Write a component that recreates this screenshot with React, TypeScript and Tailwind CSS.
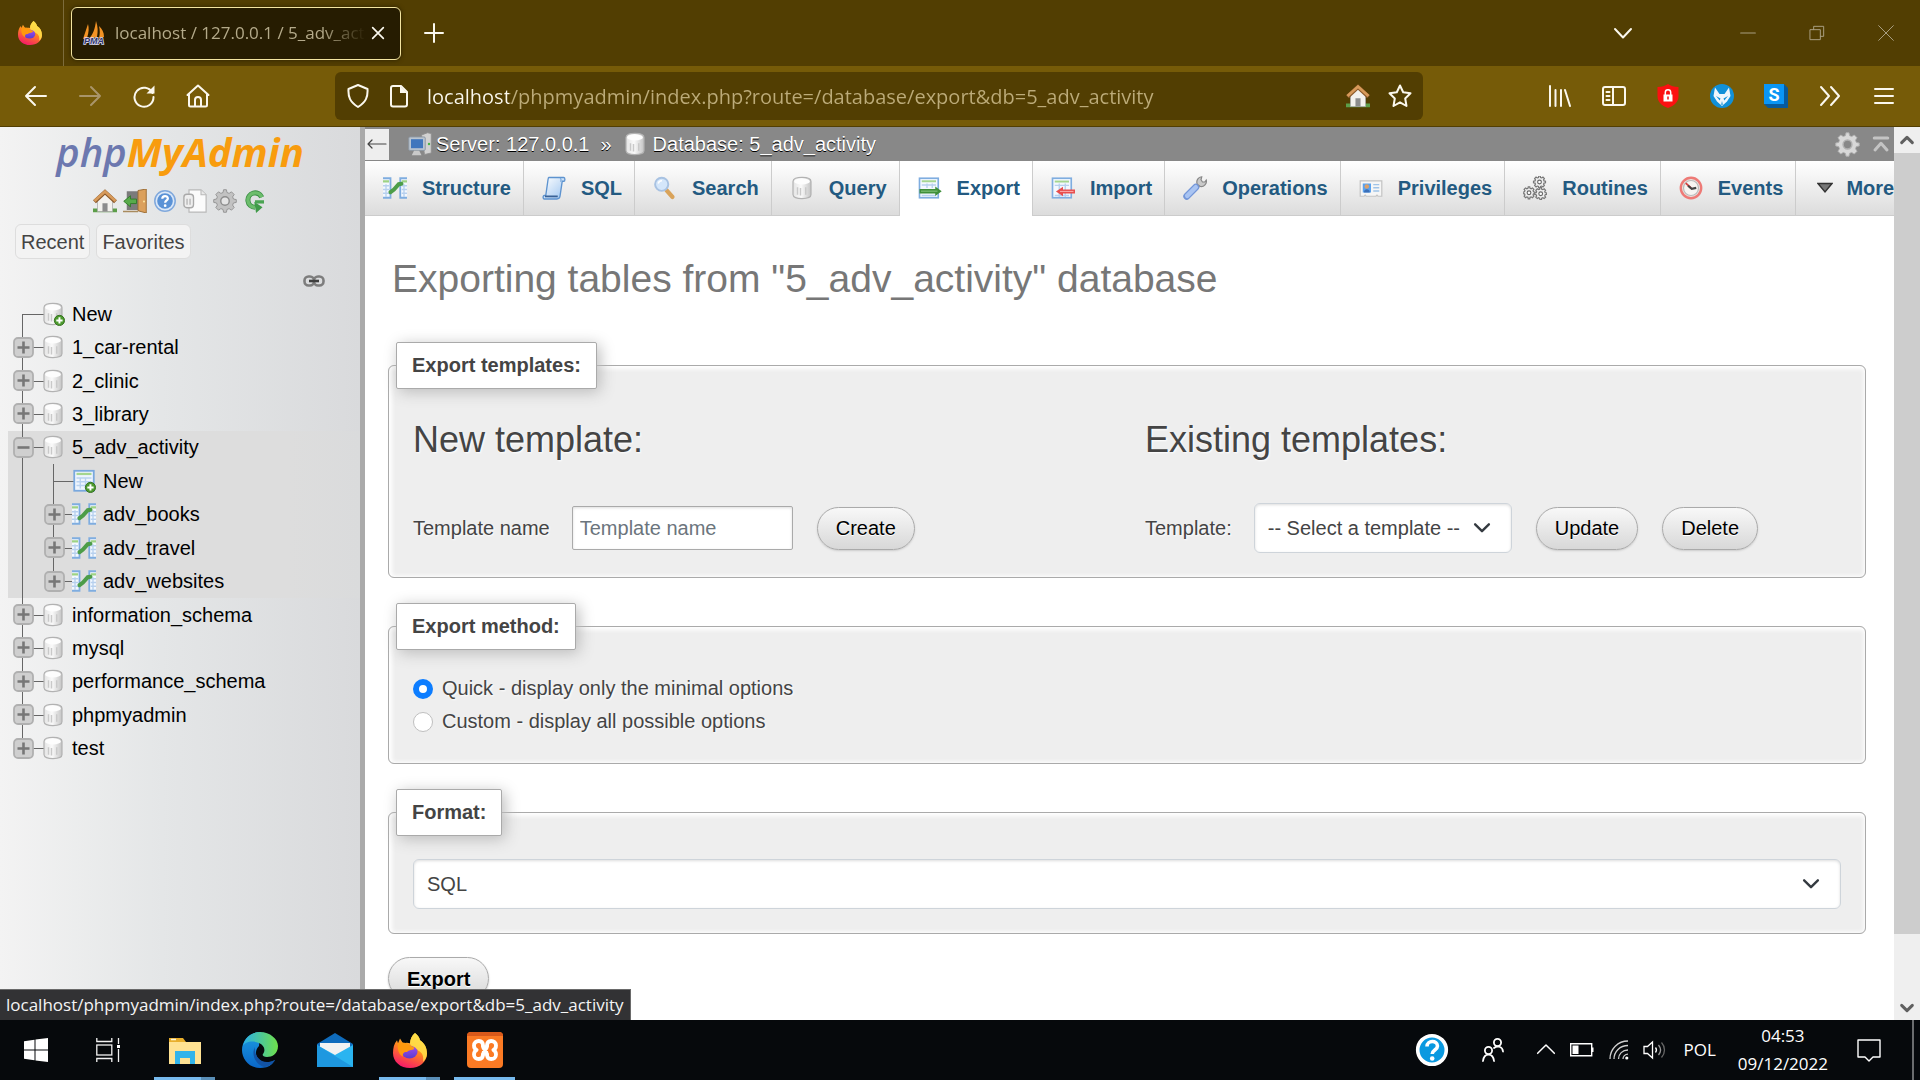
import React from "react";

type IconProps = { className?: string };

/* ---------- phpMyAdmin icons ---------- */

const DbShape = () => (
  <>
    <path d="M2 3.600C2 1.900 4.500.9 8 .9s6 1 6 2.700v8.800c0 1.700-2.500 2.700-6 2.700s-6-1-6-2.700z" fill="url(#dbBody)" stroke="#b2b2b2" strokeWidth=".8" />
    <ellipse cx="8" cy="3.600" rx="5.200" ry="2" fill="#fdfdfd" />
    <path d="M5 7.500v5M7 8v5M10.500 7.500v5" stroke="#c9c9c9" strokeWidth="1" />
  </>
);

const PlusBadge = () => (
  <>
    <circle cx="12.300" cy="12.300" r="3.400" fill="#4d9a2e" stroke="#2f6b1a" strokeWidth=".6" />
    <path d="M12.300 10.200v4.200M10.200 12.300h4.200" stroke="#fff" strokeWidth="1.300" />
  </>
);

const DbIcon = ({ className = "size-5" }: IconProps) => (
  <svg viewBox="0 0 16 16" className={className} aria-hidden="true"><DbShape /></svg>
);

const DbNewIcon = ({ className = "size-5" }: IconProps) => (
  <svg viewBox="0 0 16 16" className={className} aria-hidden="true"><DbShape /><PlusBadge /></svg>
);

const TableNewIcon = ({ className = "size-6" }: IconProps) => (
  <svg viewBox="0 0 16 16" className={className} aria-hidden="true">
    <rect x="1.500" y="1.200" width="13" height="13.300" fill="#eef5fd" stroke="#79a8de" strokeWidth="1.200" />
    <path d="M3 3.300h10" stroke="#a5d68f" strokeWidth="1.500" />
    <path d="M3 6h10M3 8.500h10M3 11h10M5.500 5.500V13M9 5.500V13" stroke="#b9d2f0" strokeWidth=".9" />
    <PlusBadge />
  </svg>
);

const StructureIcon = ({ className = "size-6" }: IconProps) => (
  <svg viewBox="0 0 16 16" className={className} aria-hidden="true">
    <path d="M0 1.500h5v13H0z" fill="#f3f8fe" />
    <path d="M0 1.500h5v13H0" fill="none" stroke="#7fade0" strokeWidth="1.200" />
    <path d="M16 1.500h-4.500v13H16" fill="#f3f8fe" stroke="#7fade0" strokeWidth="1.200" />
    <path d="M0 3.500h4M12.500 3.500H16" stroke="#9ed284" strokeWidth="1.500" />
    <path d="M0 6.500h4M0 9h4M0 11.500h4M12.500 6.500H16M12.500 9H16M12.500 11.500H16M2 5.500V14M14 5.500V14" stroke="#b7d0ee" strokeWidth=".9" />
    <path d="M5 10.800 7.300 9l3.200-3.500 1.800-.3" fill="none" stroke="#4d9d49" strokeWidth="2.700" strokeLinecap="round" />
  </svg>
);

const SqlIcon = ({ className }: IconProps) => (
  <svg viewBox="0 0 16 16" className={className} aria-hidden="true">
    <path d="M4.500 1h10c1 0 1 2.500 0 2.500h-1L12 13.500c-.2 1.200-.8 1.800-2 1.800H1.500c-1 0-1-2.300 0-2.300h1L4 2.500C4.100 1.500 4.300 1 4.500 1z" fill="url(#scroll)" stroke="#5d93cf" strokeWidth=".9" />
    <path d="M2 13.600h8.500" stroke="#3a6297" strokeWidth="1.200" />
    <path d="M12 1.500c1 .5.800 1.500.3 2.200" stroke="#7baadd" fill="none" strokeWidth=".8" />
  </svg>
);

const SearchIcon = ({ className }: IconProps) => (
  <svg viewBox="0 0 16 16" className={className} aria-hidden="true">
    <path d="m9 9.500 4 4.500" stroke="#d9a35a" strokeWidth="2.800" strokeLinecap="round" />
    <circle cx="5.800" cy="5.500" r="4.400" fill="#d4e6fa" stroke="#a8c2e2" strokeWidth="1.300" />
    <path d="M3.500 5a2.500 2.500 0 0 1 2.500-1.800" stroke="#fff" fill="none" />
  </svg>
);

const ExportIcon = ({ className }: IconProps) => (
  <svg viewBox="0 0 16 16" className={className} aria-hidden="true">
    <rect x="1" y="1.500" width="12.500" height="13" fill="#f3f8fe" stroke="#7fade0" strokeWidth="1.100" />
    <path d="M2.500 3.500h9.500" stroke="#a5d68f" strokeWidth="1.300" />
    <path d="M2.500 6h9.500M2.500 13h9.500M6 5v3M9.500 5v3" stroke="#b7d0ee" strokeWidth=".9" />
    <path d="M1 8.700h10.500V7L15.800 10.200 11.500 13.300v-1.700H1z" fill="#3f8f3a" />
    <path d="M2 10.100h11" stroke="#86c77e" strokeWidth=".7" />
  </svg>
);

const ImportIcon = ({ className }: IconProps) => (
  <svg viewBox="0 0 16 16" className={className} aria-hidden="true">
    <rect x="1" y="1.500" width="12.500" height="13" fill="#f3f8fe" stroke="#7fade0" strokeWidth="1.100" />
    <path d="M2.500 3.700h9.500" stroke="#a5d68f" strokeWidth="1.300" />
    <path d="M2.500 6.200h9.500M2.500 13h9.500M5.500 5v9M9.500 5v9" stroke="#b7d0ee" strokeWidth=".9" />
    <path d="M16 9h-8V7.200L3.300 10.400 8 13.500v-1.900h8z" fill="#e84f4f" />
    <path d="M6 10.300h9" stroke="#f9a4a4" strokeWidth=".7" />
  </svg>
);

const WrenchIcon = ({ className }: IconProps) => (
  <svg viewBox="0 0 16 16" className={className} aria-hidden="true">
    <path d="M9 7.500 11 5.500" stroke="#a8a8a8" strokeWidth="3" />
    <path d="M9.500 5.500c-1-2.500.8-5 3-5L12 2.500l1 1.500h1.500l1-1.300c.6 2.300-1.500 4.800-4 4.300z" fill="#c9c9c9" stroke="#888" strokeWidth=".8" />
    <path d="m2.500 13.500 6-6" stroke="#7396d8" strokeWidth="4.600" strokeLinecap="round" />
    <path d="m2.800 13.200 5.700-5.700" stroke="#a9c4f2" strokeWidth="3" strokeLinecap="round" />
  </svg>
);

const CardIcon = ({ className }: IconProps) => (
  <svg viewBox="0 0 16 16" className={className} aria-hidden="true">
    <path d="M.8 3.300h14.400v10.200h-2.500l-.7-.8-.7.800H4.800l-.7-.8-.7.800H.8z" fill="#f6f6f6" stroke="#c4c4c4" strokeWidth=".8" />
    <rect x="2.500" y="5" width="5.500" height="6" fill="#5aa2ee" />
    <circle cx="5.200" cy="7" r="1.500" fill="#dba06a" />
    <path d="M3.300 11c0-2.800 3.900-2.800 3.900 0z" fill="#3b6fb8" />
    <path d="M9.500 5.700h4M9.500 7.800h4M9.500 10h4" stroke="#9fc3e8" strokeWidth=".9" />
  </svg>
);

const gearPath = "M7 0h2l.4 2 1.500.6L12.600 1.500 14.500 3.400 13.400 5.100 14 6.600l2 .4v2l-2 .4-.6 1.500 1.100 1.700-1.900 1.900-1.700-1.100-1.500.6L9 16H7l-.4-2-1.500-.6-1.700 1.100-1.900-1.900 1.100-1.700L2 9.400 0 9V7l2-.4.600-1.500L1.500 3.400 3.400 1.500l1.700 1.100L6.600 2z";

const RoutinesIcon = ({ className }: IconProps) => (
  <svg viewBox="0 0 16 16" className={className} aria-hidden="true">
    {["translate(7 0) scale(.5)", "translate(0 7.200) scale(.5)", "translate(7.800 7.800) scale(.5)"].map((t) => (
      <g key={t} transform={t}>
        <path d={gearPath} fill="#eee" stroke="#777" strokeWidth="1.600" />
        <circle cx="8" cy="8" r="2.500" fill="#fff" stroke="#666" strokeWidth="1.500" />
      </g>
    ))}
  </svg>
);

const EventsIcon = ({ className }: IconProps) => (
  <svg viewBox="0 0 16 16" className={className} aria-hidden="true">
    <circle cx="8" cy="8" r="6.800" fill="#e9e5e0" stroke="#ee7a76" strokeWidth="1.600" />
    <circle cx="8" cy="8" r="5" fill="#f7f5f2" stroke="#bbb" strokeWidth=".8" />
    <path d="M4.500 4.700 8 8" stroke="#d64040" strokeWidth="1.200" />
    <path d="M6 6.500 8.500 8.500l3-.6" fill="none" stroke="#444" strokeWidth="1.400" />
  </svg>
);

const MoreIcon = () => (
  <svg viewBox="0 0 16 14" className="h-[14px] w-4" aria-hidden="true">
    <path d="M1 2.500h14L8 11z" fill="#777" stroke="#333" strokeWidth="1.400" />
  </svg>
);

const GearIcon = ({ className, fill = "#c2c2c2", stroke = "#8d8d8d", hub = "#e4e4e4" }: IconProps & { fill?: string; stroke?: string; hub?: string }) => (
  <svg viewBox="-.5 -.5 17 17" className={className} aria-hidden="true">
    <path d={gearPath} fill={fill} stroke={stroke} strokeWidth=".6" />
    <circle cx="8" cy="8" r="3" fill={hub} stroke={stroke} strokeWidth="1" />
  </svg>
);

const HouseIcon = ({ className }: IconProps) => (
  <svg viewBox="0 0 16 16" className={className} aria-hidden="true">
    <path d="M0 13h16v2.500H0z" fill="#5c9e49" />
    <path d="M3 7.500 8 3l5 4.500V15H3z" fill="#f3f1ed" stroke="#aaa" strokeWidth=".5" />
    <path d="M6.300 9.500h3.400V15H6.300z" fill="#8c8c8c" />
    <path d="M1 8.500 8 2l7 6.500" fill="none" stroke="#8c5a2b" strokeWidth="2.800" />
    <path d="M1 8 8 1.700 15 8" fill="none" stroke="#d79a5a" strokeWidth="1.900" />
  </svg>
);

const LogoutIcon = ({ className }: IconProps) => (
  <svg viewBox="0 0 16 16" className={className} aria-hidden="true">
    <path d="M2.500 1.500H10v12.500H2.500z" fill="#7b7b7b" />
    <path d="M10 1l5.500-1v16L10 14.500z" fill="#dba05c" stroke="#97662c" strokeWidth=".6" />
    <circle cx="14" cy="8.300" r=".7" fill="#fae29c" />
    <path d="M.5 8.200 5 4.500v2.200h4v3H5v2.200z" fill="#58ab4b" stroke="#2f7a28" strokeWidth=".6" />
    <path d="M0 15h10" stroke="#a88b5e" strokeWidth="1" />
  </svg>
);

const HelpIcon = ({ className }: IconProps) => (
  <svg viewBox="0 0 16 16" className={className} aria-hidden="true">
    <circle cx="8" cy="8" r="6.800" fill="#dbe8f8" stroke="#7fa8dc" strokeWidth="1" />
    <circle cx="8" cy="8" r="5.200" fill="#5a92d6" />
    <path d="M6.200 6.500c0-2.400 3.700-2.300 3.700-.2 0 1.300-1.800 1.300-1.800 2.900" fill="none" stroke="#fff" strokeWidth="1.500" />
    <circle cx="8.100" cy="11.100" r=".9" fill="#fff" />
  </svg>
);

const DocsIcon = ({ className }: IconProps) => (
  <svg viewBox="0 0 16 16" className={className} aria-hidden="true">
    <path d="M4 .6h8l3.400 3.200v11.600H4z" fill="#fbfbfb" stroke="#b9b9b9" strokeWidth=".8" />
    <path d="M12 .6v3.200h3.400" fill="#e8e8e8" stroke="#b9b9b9" strokeWidth=".7" />
    <rect x=".6" y="3.500" width="6.400" height="9" rx="2" fill="#eee" stroke="#a9a9a9" strokeWidth=".9" />
    <path d="M2.700 6.500v4M4.700 6.500v4" stroke="#b5b5b5" strokeWidth=".9" />
  </svg>
);

const ReloadGreenIcon = ({ className }: IconProps) => (
  <svg viewBox="0 0 16 16" className={className} aria-hidden="true">
    <path d="M12.500 5.500A4.800 4.800 0 1 0 8 12.200" fill="none" stroke="#3b8f45" strokeWidth="3.400" />
    <path d="M12.500 5.500A4.800 4.800 0 1 0 8 12.200" fill="none" stroke="#6cbd6c" strokeWidth="2.300" />
    <path d="M7.500 8.500 13 12.200 8.700 16z" fill="#3f9a48" />
    <path d="M8 9.700V7.500h6V9.700z" fill="#4aa452" />
  </svg>
);

const ChainIcon = ({ className }: IconProps) => (
  <svg viewBox="0 0 22 12" className={className} aria-hidden="true">
    <rect x="1.500" y="1.500" width="9.500" height="9" rx="4" fill="none" stroke="#7d7d7d" strokeWidth="2.600" />
    <rect x="11" y="1.500" width="9.500" height="9" rx="4" fill="none" stroke="#7d7d7d" strokeWidth="2.600" />
    <path d="M6 6h10" stroke="#3f3f3f" strokeWidth="2.600" />
  </svg>
);

const ServerIcon = ({ className }: IconProps) => (
  <svg viewBox="0 0 16 16" className={className} aria-hidden="true">
    <path d="M9 2l4-1.500L15.500 1v13L11 15z" fill="#d2d2d2" stroke="#8e8e8e" strokeWidth=".6" />
    <circle cx="14" cy="8" r=".8" fill="#47b447" />
    <rect x=".5" y="3.300" width="11" height="9" rx=".8" fill="#b9c4d0" stroke="#8b95a0" strokeWidth=".6" />
    <rect x="2" y="4.800" width="8" height="6" fill="#4076bd" />
    <path d="M4 12.500h3.500l1.500 3H2.500z" fill="#c9c9c9" />
  </svg>
);

const Expander = ({ open = false }: { open?: boolean }) => (
  <svg viewBox="0 0 21 21" className="size-[21px]" aria-hidden="true">
    <rect x="1" y="1" width="19" height="19" rx="4" fill="#cfcfcf" stroke="#b0b0b0" strokeWidth="1.800" />
    <path d={open ? "M4.500 10.500h12" : "M4.500 10.500h12M10.500 4.500v12"} stroke="#777" strokeWidth="2.600" />
  </svg>
);

/* ---------- browser chrome icons ---------- */

const FirefoxIcon = ({ className }: IconProps) => (
  <svg viewBox="0 0 34 44" className={className} preserveAspectRatio="none" aria-hidden="true">
    <path d="M22 0c3 3 4.500 6 5 9 4 3 7 9 7 17 0 10-7.500 18-17 18S0 36 0 25C0 19 1 13 4 9l1 4 2-6 3 6c3-1 5-1 7 0 0-5 2-10 5-13z" fill="url(#ffBody)" />
    <path d="M22 0c3 3 4.500 6 5 9 5 4 7 10 7 17 0 4-2 8-4 10 1-7-1-12-5-14-2-4-8-5-8-9 0-5 2-10 5-13z" fill="#ffe14a" opacity=".85" />
    <circle cx="16.500" cy="24" r="8" fill="url(#ffCore)" />
    <path d="M5 13c4-2 9-1 12 3 3 1 5 2 4 4-2 2-6 1-7 4-2-1-5 1-4 6-4-3-6-8-5-17z" fill="#ff980e" />
  </svg>
);

const PmaIcon = ({ className }: IconProps) => (
  <svg viewBox="0 0 24 24" className={className} aria-hidden="true">
    <path d="M6 3c1 4 1 8-1 14L1 18zM14 0c2 6 2 10 1 16l-8 2c4-5 6-10 7-18zM17 5c3 3 5 6 5 11l-5 1c1-4 1-8 0-12z" fill="#f39325" />
    <text x="12" y="23" textAnchor="middle" fontSize="9" fontWeight="700" fontStyle="italic" fontFamily="Liberation Sans" stroke="#dcdcf4" strokeWidth="1.600" paintOrder="stroke" fill="#30356b">PMA</text>
  </svg>
);

const line = { fill: "none", stroke: "currentColor", strokeLinecap: "round" as const, strokeLinejoin: "round" as const };

const ChromeIcon = ({ d, w = 2, className = "size-6" }: { d: string; w?: number; className?: string }) => (
  <svg viewBox="0 0 24 24" className={className} aria-hidden="true" {...line} strokeWidth={w}><path d={d} /></svg>
);

const ReloadIcon = () => (
  <svg viewBox="0 0 24 24" className="size-6" aria-hidden="true">
    <path d="M20.500 9A9.500 9.500 0 1 0 21.500 13" {...line} strokeWidth="2" />
    <path d="M22.500 1.500v8h-8z" fill="currentColor" />
  </svg>
);

const PageIcon = () => (
  <svg viewBox="0 0 24 24" className="size-6" aria-hidden="true">
    <path d="M6 2h8l6 6v12.500a2 2 0 0 1-2 2H6a2 2 0 0 1-2-2V4a2 2 0 0 1 2-2z" {...line} strokeWidth="2" />
    <path d="M13 2v7h7z" fill="currentColor" />
  </svg>
);

const LockShieldIcon = () => (
  <svg viewBox="0 0 24 24" className="size-6" aria-hidden="true">
    <path d="M12 0c3 2 6 3 10.500 3v9c0 6-4 9.500-10.500 12C5.500 21.500 1.500 18 1.500 12V3C6 3 9 2 12 0z" fill="#fb1111" />
    <rect x="7.500" y="10.500" width="9" height="7" fill="#fff" />
    <path d="M9.300 11V8.500a2.700 2.700 0 0 1 5.400 0V11" fill="none" stroke="#fff" strokeWidth="1.500" />
    <path d="M12 12.500v3" stroke="#e11" strokeWidth="1.500" />
  </svg>
);

const FoxIcon = () => (
  <svg viewBox="0 0 24 24" className="size-6" aria-hidden="true">
    <circle cx="12" cy="12" r="12" fill="#1190d8" />
    <path d="M5 3.500 9.500 10h5L19 3.500l1.500 8.500L17 17.500 12 22l-5-4.500L3.500 12z" fill="#eef6fc" />
    <path d="m6 12 4.500 2.500-.8 2zM18 12l-4.500 2.500.8 2z" fill="#1190d8" />
    <path d="m12 17 1.500 4h-3z" fill="#6ab8e4" />
  </svg>
);

const SIcon = () => (
  <svg viewBox="0 0 24 24" className="size-6" aria-hidden="true">
    <path d="M20 0l4 4v20H4l-4-4z" fill="#075a9c" />
    <path d="M0 0h20v20H0z" fill="#0a96f5" />
    <text x="10" y="16.500" textAnchor="middle" fontSize="18" fontWeight="700" fontFamily="Roboto" fill="#fff">S</text>
  </svg>
);

/* ---------- taskbar icons ---------- */

const WindowsIcon = () => (
  <svg viewBox="0 0 24 24" className="size-6" fill="#fff" aria-hidden="true">
    <path d="M0 3.300 10.500 1.800v9.700H0zM11.500 1.600 24 0v11.500H11.500zM0 12.500h10.500v9.700L0 20.700zM11.500 12.500H24V24l-12.500-1.600z" />
  </svg>
);

const TaskViewIcon = () => (
  <svg viewBox="0 0 24 24" className="size-6" fill="none" stroke="#f2f2f2" strokeWidth="1.300" aria-hidden="true">
    <rect x=".8" y="7" width="15" height="10" />
    <path d="M.8 0v3.500h15V0M.8 24v-3.500h15V24M22.500 0v6M22.500 11v13" />
    <path d="M21 7h3v3h-3z" fill="#fff" stroke="none" />
  </svg>
);

const ExplorerIcon = () => (
  <svg viewBox="0 0 32 27" className="h-[27px] w-8" aria-hidden="true">
    <path d="M0 1h14l3 4v6H0z" fill="#e8ae2c" />
    <path d="M0 5h32v22H0z" fill="#ffe292" />
    <path d="M6 14h20v13h-5v-6H11v6H6z" fill="#32b4ea" />
    <path d="M2 2.500h5" stroke="#fff7d6" strokeWidth="1.500" />
  </svg>
);

const EdgeIcon = () => (
  <svg viewBox="0 0 36 36" className="size-9" aria-hidden="true">
    <path d="M18 0C8 0 0 8 0 18c0 9 7 18 18 18 4 0 9-1 12-4l3-4c-5 3-14 4-18-3-2-4-1-8 2-11z" fill="url(#edgeBlue)" />
    <path d="M1 14C3 5 10 0 18 0c10 0 18 7 18 14 0 8-6 11-11 11-4 0-5-2-4-3 3-4 1-9-4-11C10 8 3 10 1 14z" fill="url(#edgeTop)" />
    <path d="M13 15c-4 7 0 17 9 20 4 0 9-3 11-7-4 2-9 3-13 1-5-3-8-8-7-14z" fill="#1253a5" />
  </svg>
);

const MailIcon = () => (
  <svg viewBox="0 0 36 34" className="h-[34px] w-9" aria-hidden="true">
    <path d="M0 11 18 0l18 11v6H0z" fill="#0f6cbd" />
    <path d="M3 10h30v10L18 27 3 20z" fill="#f2f2f2" />
    <path d="M0 12l18 10 18-10v22H0z" fill="#2ab4f0" />
    <path d="M0 12l36 22H0z" fill="#1e98e0" />
  </svg>
);

const XamppIcon = () => (
  <svg viewBox="0 0 36 36" className="size-9" aria-hidden="true">
    <rect width="36" height="36" rx="4" fill="#fb7a24" />
    <path d="M0 4a4 4 0 0 1 4-4h28a4 4 0 0 1 4 4z" fill="#d9591a" />
    <g fill="none" stroke="#fff" strokeWidth="3.800" strokeLinecap="round" strokeLinejoin="round">
      <path d="M16 14c0-3.500-1.500-5-4.200-5S7 10.800 7 13.500s1 3.700 2.600 4.500C8 18.800 7 19.800 7 22.500S9 27 11.800 27s4.200-1.500 4.200-4.500" />
      <path d="M20 14c0-3.500 1.500-5 4.200-5S29 10.800 29 13.500s-1 3.700-2.600 4.500c1.600.8 2.600 1.800 2.600 4.500S27 27 24.200 27 20 25.500 20 22.500" />
      <path d="M16 14c0 1.500.5 2.500 2 4s2 2.500 2 4.500M20 14c0 1.500-.5 2.500-2 4s-2 2.500-2 4.500" />
    </g>
  </svg>
);

const HelpBubbleIcon = () => (
  <svg viewBox="0 0 34 34" className="size-[34px]" aria-hidden="true">
    <circle cx="17" cy="17" r="14.300" fill="#0a99e0" stroke="#fff" strokeWidth="3.600" />
    <path d="M12 13.500c0-6.500 10.500-6.500 10.500-.5 0 4-5.300 4-5.300 8" fill="none" stroke="#fff" strokeWidth="3.600" />
    <circle cx="17.200" cy="25.500" r="2.300" fill="#fff" />
  </svg>
);

const PeopleIcon = () => (
  <svg viewBox="0 0 24 24" className="size-6" {...line} strokeWidth="1.800" aria-hidden="true">
    <circle cx="16.500" cy="4.500" r="3.600" /><path d="M13 10c3-2.500 8.500-2 9 3.500" />
    <circle cx="7.500" cy="12.500" r="3.600" /><path d="M2 23c1-8.500 10-8.500 11 0" />
  </svg>
);

const BatteryIcon = () => (
  <svg viewBox="0 0 24 14" className="h-[14px] w-6" aria-hidden="true">
    <path d="M.7.700h21v12H.7z" fill="none" stroke="#fff" strokeWidth="1.400" />
    <path d="M2.500 2.500h6v8.500h-6zM22 4.500h1.500v4.500H22z" fill="#fff" />
  </svg>
);

const WifiIcon = () => (
  <svg viewBox="0 0 20 20" className="size-5" fill="none" stroke="#cfcfcf" strokeWidth="1.300" aria-hidden="true">
    <path d="M1 19C1 9 9 1 19 1" /><path d="M5 19c0-7.500 6-13.500 14-13.500" /><path d="M9.500 19c0-5 4-9 9.500-9" /><path d="M14 19c0-2.500 2-4.800 5-4.800" />
    <circle cx="17.800" cy="18" r="1.600" fill="#fff" stroke="none" />
  </svg>
);

const VolumeIcon = () => (
  <svg viewBox="0 0 24 20" className="h-5 w-6" fill="none" stroke="#fff" strokeWidth="1.300" aria-hidden="true">
    <path d="M1 6.500h3.500L9.500 2v16l-5-4.500H1z" /><path d="M12.500 7.500c1.200 1.500 1.200 3.500 0 5" />
    <path d="M15.500 5c2.500 3 2.500 7 0 10" stroke="#999" /><path d="M18.500 2.500c4 4.500 4 10.500 0 15" stroke="#666" />
  </svg>
);

const Defs = () => (
  <svg className="absolute size-0" aria-hidden="true">
    <defs>
      <linearGradient id="dbBody"><stop offset="0" stopColor="#e4e4e4" /><stop offset=".45" stopColor="#fafafa" /><stop offset="1" stopColor="#c4c4c4" /></linearGradient>
      <linearGradient id="scroll" x1="0" y1="0" x2="1" y2="1"><stop offset="0" stopColor="#fff" /><stop offset="1" stopColor="#9cc4f0" /></linearGradient>
      <linearGradient id="ffBody" x1=".7" y1="0" x2=".3" y2="1"><stop offset="0" stopColor="#ffe045" /><stop offset=".45" stopColor="#ff8a1c" /><stop offset="1" stopColor="#f5156c" /></linearGradient>
      <linearGradient id="ffCore" x1="0" y1="0" x2="0" y2="1"><stop offset="0" stopColor="#a14df0" /><stop offset="1" stopColor="#5a3ccc" /></linearGradient>
      <linearGradient id="edgeBlue" x1="0" y1="0" x2="0" y2="1"><stop offset="0" stopColor="#1c9de2" /><stop offset="1" stopColor="#0a66c8" /></linearGradient>
      <linearGradient id="edgeTop"><stop offset="0" stopColor="#2ab0e8" /><stop offset="1" stopColor="#6fe04a" /></linearGradient>
    </defs>
  </svg>
);

/* ---------- data ---------- */

const tabs = [
  { label: "Structure", Icon: StructureIcon },
  { label: "SQL", Icon: SqlIcon },
  { label: "Search", Icon: SearchIcon },
  { label: "Query", Icon: DbIcon },
  { label: "Export", Icon: ExportIcon, active: true },
  { label: "Import", Icon: ImportIcon },
  { label: "Operations", Icon: WrenchIcon },
  { label: "Privileges", Icon: CardIcon },
  { label: "Routines", Icon: RoutinesIcon },
  { label: "Events", Icon: EventsIcon },
];

type Node = { name: string; level: 0 | 1; kind: "new" | "item"; open?: boolean; lit?: boolean; last?: boolean };

const tree: Node[] = [
  { name: "New", level: 0, kind: "new" },
  { name: "1_car-rental", level: 0, kind: "item" },
  { name: "2_clinic", level: 0, kind: "item" },
  { name: "3_library", level: 0, kind: "item" },
  { name: "5_adv_activity", level: 0, kind: "item", open: true, lit: true },
  { name: "New", level: 1, kind: "new", lit: true },
  { name: "adv_books", level: 1, kind: "item", lit: true },
  { name: "adv_travel", level: 1, kind: "item", lit: true },
  { name: "adv_websites", level: 1, kind: "item", lit: true, last: true },
  { name: "information_schema", level: 0, kind: "item" },
  { name: "mysql", level: 0, kind: "item" },
  { name: "performance_schema", level: 0, kind: "item" },
  { name: "phpmyadmin", level: 0, kind: "item" },
  { name: "test", level: 0, kind: "item", last: true },
];

/* ---------- parts ---------- */

function TreeCell({ node }: { node: Node }) {
  const isNew = node.kind === "new";
  const rail = node.level === 1 && isNew ? "inset-y-0" : isNew ? "top-1/2 bottom-0" : node.last ? "top-0 bottom-1/2" : "inset-y-0";
  return (
    <>
      <span className="relative flex w-7 shrink-0 items-center self-stretch">
        <span className={`absolute left-[9px] w-px bg-[#666] ${rail}`} />
        <span className={`absolute -right-1 top-1/2 h-px bg-[#666] ${isNew ? "left-[9px]" : "left-5"}`} />
        {!isNew && (
          <button className="relative" aria-label={`Expand ${node.name}`}><Expander open={node.open} /></button>
        )}
      </span>
      <a href="#" className="relative flex items-center gap-[7px] self-stretch">
        {node.level === 0
          ? (isNew ? <DbNewIcon className="size-6" /> : <DbIcon className="size-6" />)
          : (isNew ? <TableNewIcon className="size-6" /> : <StructureIcon className="size-6" />)}
        <span>{node.name}</span>
      </a>
    </>
  );
}

function Sidebar() {
  const quick = [
    ["Home", HouseIcon], ["Log out", LogoutIcon], ["Documentation", HelpIcon],
    ["MariaDB documentation", DocsIcon], ["Settings", GearIcon], ["Reload", ReloadGreenIcon],
  ] as const;
  return (
    <aside className="flex w-[365px] shrink-0 flex-col border-r-[5px] border-[#aaa] bg-[linear-gradient(90deg,#f3f3f3,#e4e6e7_45%,#d9dadc)] text-xl leading-6 text-black">
      <a href="#" className="mt-1 flex h-[50px] justify-center font-['Open_Sans',sans-serif] text-[40px] font-bold italic leading-[42px]">
        <span className="font-semibold text-[#6c78af]">php</span><span className="text-[#f89c0e]">MyAdmin</span>
      </a>
      <nav className="mt-2 flex justify-center gap-[6px]">
        {quick.map(([label, Icon]) => (
          <a key={label} href="#" aria-label={label}><Icon className="size-6" /></a>
        ))}
      </nav>
      <div className="mt-[11px] flex gap-[6px] px-[15px] text-[#444]">
        <button className="h-[35px] rounded-md border border-[#ddd] bg-[#f3f3f3] px-[5px]">Recent</button>
        <button className="h-[35px] rounded-md border border-[#ddd] bg-[#f3f3f3] px-[5px]">Favorites</button>
      </div>
      <button className="mr-[35px] mt-4 self-end" aria-label="Unlink from main panel"><ChainIcon className="h-3 w-[22px]" /></button>
      <ul className="mt-[10px] grid h-[468px] auto-rows-fr pl-2">
        {tree.map((n, i) => (
          <li key={i} className={`flex items-center pl-[5px] ${n.lit ? "bg-[linear-gradient(90deg,#ddd_80%,#dadbdc)]" : ""}`}>
            {n.level === 1 && (
              <span className="relative w-[31px] shrink-0 self-stretch"><span className="absolute inset-y-0 left-[9px] w-px bg-[#666]" /></span>
            )}
            <TreeCell node={n} />
          </li>
        ))}
      </ul>
    </aside>
  );
}

function Group({ title, className, children }: { title: string; className: string; children: React.ReactNode }) {
  return (
    <fieldset className={`min-w-0 rounded-md border border-[#aaa] bg-[#eee] px-6 shadow-[inset_1px_1px_4px_2px_#fff] [text-shadow:1px_1px_2px_#fff] ${className}`}>
      <legend className="-ml-[17px] rounded-xs border border-[#aaa] bg-white px-[15px] py-[10px] font-bold leading-[25px] shadow-[3px_3px_15px_#bbb]">{title}</legend>
      {children}
    </fieldset>
  );
}

const pill = "h-[43px] rounded-full border border-[#aaa] bg-[linear-gradient(#f8f8f8,#d8d8d8)] px-[18px] text-black shadow-[0_1px_2px_#ccc] [text-shadow:0_1px_0_#fff]";

function Picker({ id, value, className }: { id: string; value: string; className: string }) {
  return (
    <span className={`relative block ${className}`}>
      <select id={id} aria-label={id} className="h-[50px] w-full appearance-none rounded-md border border-[#ced4da] bg-white pl-[13px] pr-10 text-[#444] shadow-[inset_0_1px_3px_#ddd]">
        <option>{value}</option>
      </select>
      <ChromeIcon d="m4.500 8 7.500 7.500L19.500 8" w={2.600} className="pointer-events-none absolute right-[19px] top-[14px] size-[22px] text-[#343a40]" />
    </span>
  );
}

function MainPanel() {
  return (
    <main className="flex min-w-0 flex-1 flex-col overflow-hidden bg-white text-xl text-[#444]">
      <div className="flex h-[34px] shrink-0 items-center bg-[#888] text-white [text-shadow:0_1px_0_#000]">
        <button className="flex h-[31px] w-6 items-center justify-center bg-[#eee] text-[#444]" aria-label="Hide panel">
          <svg viewBox="0 0 20 10" className="h-[10px] w-5" {...line} strokeWidth="1.200" aria-hidden="true"><path d="M19 5H1M5 1 1 5l4 4" /></svg>
        </button>
        <ServerIcon className="ml-[19px] size-6" />
        <a href="#" className="ml-1">Server: 127.0.0.1</a>
        <span className="mx-[11px]">»</span>
        <DbIcon className="size-6" />
        <a href="#" className="ml-[6px]">Database: 5_adv_activity</a>
        <span className="ml-auto flex items-center gap-3">
          <button aria-label="Page settings"><GearIcon className="size-[25px]" fill="#d8d8d8" stroke="#b0b0b0" hub="#888" /></button>
          <button aria-label="Collapse" className="mr-1 text-[#c4c4c4]"><ChromeIcon d="M3 4h18M4 20l8-9 8 9" w={4} className="size-[18px]" /></button>
        </span>
      </div>
      <nav className="flex h-[55px] shrink-0 border-b border-[#ccc] bg-[linear-gradient(#fff,#dcdcdc)] font-bold text-[#235a81]">
        {tabs.map(({ label, Icon, active }) => (
          <a key={label} href="#" className={`flex shrink-0 items-center gap-[15px] border-r border-r-[#ccc] pb-[1px] pl-[18px] pr-3 ${active ? "-mb-px bg-white" : ""}`}>
            <Icon className="size-6" />{label}
          </a>
        ))}
        <a href="#" className="flex shrink-0 items-center gap-[13px] pb-[1px] pl-[21px]"><MoreIcon />More</a>
      </nav>

      <div className="shrink-0 pl-[23px] pr-7">
        <h2 className="ml-1 mt-[39px] text-[39px] leading-[48px] text-[#777]">Exporting tables from "5_adv_activity" database</h2>

        <Group title="Export templates:" className="mt-[39px] h-[236px]">
          <div className="grid grid-cols-2 gap-9 pt-[29px]">
            <form>
              <h3 className="text-[36px] leading-[43px]">New template:</h3>
              <div className="mt-[42px] flex h-[50px] items-center">
                <label htmlFor="tplName">Template name</label>
                <input id="tplName" placeholder="Template name" className="ml-[22px] h-[44px] w-[221px] rounded-xs border border-[#aaa] bg-white px-[7px] shadow-[inset_0_1px_3px_#ddd] placeholder:text-[#6c757d]" />
                <button type="button" className={`ml-6 ${pill}`}>Create</button>
              </div>
            </form>
            <form>
              <h3 className="text-[36px] leading-[43px]">Existing templates:</h3>
              <div className="mt-[42px] flex h-[50px] items-center">
                <label htmlFor="template">Template:</label>
                <Picker id="template" value="-- Select a template --" className="ml-[22px] w-[258px]" />
                <button type="button" className={`ml-6 ${pill}`}>Update</button>
                <button type="button" className={`ml-6 ${pill}`}>Delete</button>
              </div>
            </form>
          </div>
        </Group>

        <Group title="Export method:" className="mt-[25px] h-[161px]">
          <div className="flex flex-col gap-1 pt-6 leading-[29px]">
            {["Quick - display only the minimal options", "Custom - display all possible options"].map((t, i) => (
              <label key={t} className="flex items-center gap-[9px]">
                <input type="radio" name="method" defaultChecked={i === 0} className="size-5 appearance-none rounded-full border border-[#bfbfbf] bg-white checked:border-[6px] checked:border-[#0d7dff]" />
                {t}
              </label>
            ))}
          </div>
        </Group>

        <Group title="Format:" className="mt-[25px] h-[145px]">
          <div className="pt-[23px]"><Picker id="format" value="SQL" className="w-full" /></div>
        </Group>

        <button className={`mt-[23px] font-bold ${pill}`}>Export</button>
      </div>
    </main>
  );
}

function TitleBar() {
  return (
    <header className="flex h-[66px] shrink-0 items-center bg-[#523e02] text-[#fbf8ee]">
      <a href="#" aria-label="Firefox" className="flex h-full w-[64px] items-center border-r border-[#7d6c3c] pl-[18px]"><FirefoxIcon className="h-6 w-6" /></a>
      <div className="ml-[7px] flex h-[53px] w-[330px] items-center rounded-md border border-[#f3e4a0] bg-[#261c01] pl-[10px] pr-[14px] shadow-[0_0_4px_#2a2000]">
        <PmaIcon className="size-6 shrink-0" />
        <span className="ml-[9px] flex-1 overflow-hidden whitespace-nowrap text-[17px] text-[#b4aa8a] [mask-image:linear-gradient(90deg,#000_82%,transparent)]">localhost / 127.0.0.1 / 5_adv_activity</span>
        <button aria-label="Close tab" className="ml-1"><ChromeIcon d="M4 4l16 16M20 4 4 20" w={2.500} className="size-4" /></button>
      </div>
      <button aria-label="New tab" className="ml-[21px]"><ChromeIcon d="M12 3v18M3 12h18" /></button>
      <div className="ml-auto flex items-center pr-[26px]">
        <button aria-label="List all tabs" className="mr-[105px]"><ChromeIcon d="m4 8 8 8.500L20 8" /></button>
        <div className="flex items-center gap-[53px] text-[#a89e80]">
          <button aria-label="Minimize"><ChromeIcon d="M1 12h22" w={1.600} className="size-4" /></button>
          <button aria-label="Restore"><ChromeIcon d="M2 7h15v15H2zM7 7V2h15v15h-5" w={1.500} className="size-4" /></button>
          <button aria-label="Close"><ChromeIcon d="M1 1l22 22M23 1 1 23" w={1.500} className="size-4" /></button>
        </div>
      </div>
    </header>
  );
}

function ToolBar() {
  return (
    <div className="flex h-[61px] shrink-0 items-center border-b border-[#523e02] bg-[#765b08] text-[#fbf8ee]">
      <nav className="flex gap-[30px] pl-6">
        <button aria-label="Back"><ChromeIcon d="M22 12H2M11 3l-9 9 9 9" /></button>
        <button aria-label="Forward" className="text-[#a9956a]"><ChromeIcon d="M2 12h20M13 3l9 9-9 9" /></button>
        <button aria-label="Reload"><ReloadIcon /></button>
        <button aria-label="Home"><ChromeIcon d="M1.500 11 12 1.500 22.500 11M3 10v11a1.500 1.500 0 0 0 1.500 1.500h15A1.500 1.500 0 0 0 21 21V10M9 22v-6a3 3 0 0 1 6 0v6" /></button>
      </nav>
      <div className="ml-[125px] mr-[125px] flex h-12 flex-1 items-center rounded-md bg-[#523e02] px-[11px]">
        <ChromeIcon d="M12 1l9.500 4C22 13 20 18 12 23 4 18 2 13 2.500 5z" />
        <span className="ml-[17px]"><PageIcon /></span>
        <input aria-label="Address" defaultValue="localhost/phpmyadmin/index.php?route=/database/export&db=5_adv_activity" className="ml-4 min-w-0 flex-1 bg-[linear-gradient(90deg,#fbf8ee_82px,#bcab79_82px)] bg-clip-text pt-[2px] font-['Open_Sans',sans-serif] text-[20px] text-transparent outline-none" />
        <HouseIcon className="size-6" />
        <button aria-label="Bookmark" className="ml-[18px]"><ChromeIcon d="m12 1.500 3.200 6.800 7.300 1-5.300 5.200 1.300 7.500L12 18.300 5.500 22l1.300-7.500L1.500 9.300l7.300-1z" /></button>
      </div>
      <nav className="flex items-center gap-[30px] pr-6">
        <button aria-label="Library"><ChromeIcon d="M2 2v20M7.500 6v16M13 6v16M17 6l5 16" /></button>
        <button aria-label="Sidebars"><ChromeIcon d="M3 3h18a2 2 0 0 1 2 2v14a2 2 0 0 1-2 2H3a2 2 0 0 1-2-2V5a2 2 0 0 1 2-2zM11 3v18M4.500 8h3M4.500 12h3M4.500 16h3" /></button>
        <button aria-label="Ad blocker"><LockShieldIcon /></button>
        <button aria-label="Fox extension"><FoxIcon /></button>
        <button aria-label="S extension"><SIcon /></button>
        <button aria-label="More tools"><ChromeIcon d="m3 3 8 9-8 9M13 3l8 9-8 9" /></button>
        <button aria-label="Menu"><ChromeIcon d="M3 5h18M3 12h18M3 19h18" /></button>
      </nav>
    </div>
  );
}

function ScrollBar() {
  return (
    <div className="flex w-[26px] shrink-0 flex-col items-center bg-[#efefef] text-[#606060]">
      <span className="flex h-[26px] items-center"><ChromeIcon d="m4 16 8-8 8 8" w={4.500} className="size-4" /></span>
      <span className="w-full grow bg-[#cdcdcd]" />
      <span className="flex h-[86px] items-end pb-1"><ChromeIcon d="m4 8 8 8 8-8" w={4.500} className="size-4" /></span>
    </div>
  );
}

function TaskBar() {
  const apps = [
    { label: "File Explorer", icon: <ExplorerIcon />, run: "split" },
    { label: "Microsoft Edge", icon: <EdgeIcon />, run: "" },
    { label: "Mail", icon: <MailIcon />, run: "" },
    { label: "Firefox", icon: <FirefoxIcon className="h-[35px] w-[34px]" />, run: "split" },
    { label: "XAMPP", icon: <XamppIcon />, run: "full" },
  ];
  return (
    <footer className="flex h-[60px] shrink-0 items-stretch bg-[#06090c] text-white">
      <button aria-label="Start" className="flex w-[72px] items-center justify-center"><WindowsIcon /></button>
      <button aria-label="Task View" className="mr-[3px] flex w-[72px] items-center justify-center"><TaskViewIcon /></button>
      {apps.map((a) => (
        <button key={a.label} aria-label={a.label} className="flex w-[75px] flex-col items-center">
          <span className="flex flex-1 items-center pt-[3px]">{a.icon}</span>
          <span className="flex h-[3px] w-[61px]">
            {a.run && <span className="flex-1 bg-[#76b9ed]" />}
            {a.run === "split" && <span className="w-[14px] bg-[#5a8fb8]" />}
          </span>
        </button>
      ))}
      <div className="ml-auto flex items-center font-['Open_Sans',sans-serif]">
        <button aria-label="Help"><HelpBubbleIcon /></button>
        <button aria-label="People" className="ml-8"><PeopleIcon /></button>
        <button aria-label="Hidden icons" className="ml-[31px]"><ChromeIcon d="m2 16 10-10 10 10" w={1.800} className="size-5" /></button>
        <span className="ml-[14px]"><BatteryIcon /></span>
        <span className="ml-[15px]"><WifiIcon /></span>
        <span className="ml-[14px]"><VolumeIcon /></span>
        <button className="ml-4 text-[17px]">POL</button>
        <time className="ml-[22px] text-center text-[17px] leading-7">04:53<br />09/12/2022</time>
        <button aria-label="Notifications" className="ml-[29px]"><ChromeIcon d="M1 2h22v17h-7l-4 4-4-4H1z" w={1.400} /></button>
        <span className="ml-[31px] mr-[6px] h-[60px] w-[2px] bg-[#6a6c6e]" />
      </div>
    </footer>
  );
}

export default function App() {
  return (
    <div className="flex h-screen flex-col overflow-hidden font-['Liberation_Sans',Arial,sans-serif]">
      <Defs />
      <div className="font-['Open_Sans',sans-serif]">
        <TitleBar />
        <ToolBar />
      </div>
      <div className="relative flex min-h-0 flex-1">
        <Sidebar />
        <MainPanel />
        <ScrollBar />
        <div className="absolute bottom-0 left-0 h-[31px] whitespace-nowrap border-r border-t border-[#6a6a6a] bg-[#323234] px-[6px] font-['Open_Sans',sans-serif] text-[17px] leading-[30px] text-[#f5f5f5]">
          localhost/phpmyadmin/index.php?route=/database/export&amp;db=5_adv_activity
        </div>
      </div>
      <TaskBar />
    </div>
  );
}
